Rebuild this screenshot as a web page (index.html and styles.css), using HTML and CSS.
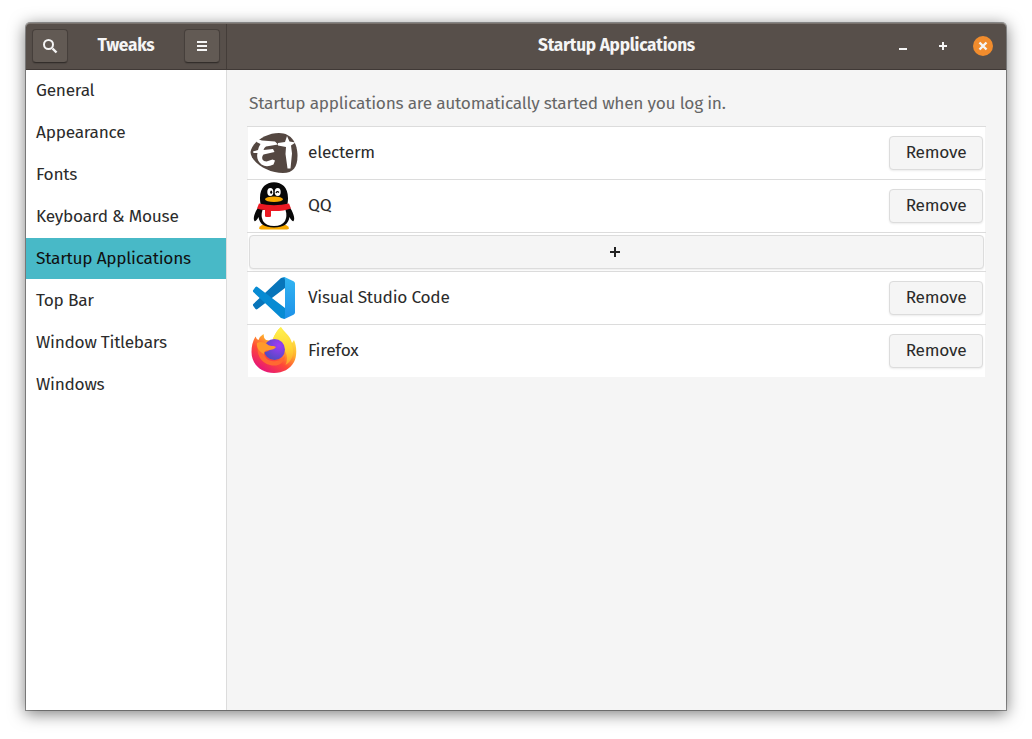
FILE: index.html
```html
<!DOCTYPE html>
<html lang="en">
<head>
<meta charset="utf-8">
<title>Tweaks</title>
<link rel="stylesheet" href="styles.css">
</head>
<body>
<div class="window">
  <header class="titlebar">
    <div class="titlebar-side">
      <button class="tool" aria-label="Search"><svg width="16" height="16" viewBox="0 0 16 16"><circle cx="6.500" cy="6.500" r="4.500" fill="none" stroke="#f5f5f5" stroke-width="2"/><path d="M10.500 10.500l4 4" stroke="#f5f5f5" stroke-width="2.400"/></svg></button>
      <h1 class="title title-app">Tweaks</h1>
      <button class="tool" aria-label="Menu"><svg width="16" height="16" viewBox="0 0 16 16"><path d="M3 4h10M3 8h10M3 12h10" stroke="#f5f5f5" stroke-width="2"/></svg></button>
    </div>
    <div class="titlebar-main">
      <h2 class="title title-page">Startup Applications</h2>
      <div class="controls">
        <svg width="20" height="20" viewBox="0 0 20 20"><path d="M6 13h8" stroke="#f5f5f5" stroke-width="2"/></svg>
        <svg width="20" height="20" viewBox="0 0 20 20"><path d="M6 10h8M10 6v8" stroke="#f5f5f5" stroke-width="2"/></svg>
        <svg width="20" height="20" viewBox="0 0 20 20"><circle cx="10" cy="10" r="10" fill="#f18c2d"/><path d="M6.500 6.500l7 7M13.500 6.500l-7 7" stroke="#f5f5f5" stroke-width="2.400"/></svg>
      </div>
    </div>
  </header>
  <div class="body">
    <nav class="sidebar">
      <a class="item">General</a>
      <a class="item">Appearance</a>
      <a class="item">Fonts</a>
      <a class="item">Keyboard &amp; Mouse</a>
      <a class="item selected">Startup Applications</a>
      <a class="item">Top Bar</a>
      <a class="item">Window Titlebars</a>
      <a class="item">Windows</a>
    </nav>
    <main class="content">
      <p class="intro">Startup applications are automatically started when you log in.</p>
      <div class="list">
        <div class="row">
          <svg class="app" viewBox="0 0 48 48"><path d="M.5 23C2 13 16 4 29 4C42 4 47.500 15 47.500 27C47.500 38 43 44 33 44C18 44 .5 33 .5 23Z" fill="#544741"/><path d="M7 10l5 1.500 13 1 3 3-12 2q-2 1-2.500 3.500l9.500-1 1.500 3-11 2.500q-2 2-1 5 1 2 4 2l6-2 2.500 1-1.500 4q-7 3.500-12 0c-4-3-5-7-4-11.500L3.500 24 3 22.500l5-1.500q.5-3 2.500-6l-4-2z" fill="#fff"/><path d="M28 14l7-1 2-6 2.500 5.500 6 1-4.500 3 1 8-1.500 15h-3L35.500 25l.5-7-8-1.500z" fill="#fff"/></svg>
          <span class="name">electerm</span><button class="remove">Remove</button>
        </div>
        <div class="row">
          <svg class="app" viewBox="0 0 48 48"><path d="M9 46q2-4 8-4h14q6 0 8 4 0 1.500-4 1.500H13Q9 47.500 9 46z" fill="#f8a900"/><path d="M10.500 22C8 7 15 .3 24 .3S40 7 37.500 22l4 6c2.500 5 3.500 9 2 11-1 1-3-2-4-4-1 7-6 10.500-15.500 10.500S9.500 42 8.500 35c-1 2-3 5-4 4-1.500-2-.5-6 2-11z" fill="#080808"/><path d="M12.500 28h23q2 6-.5 11-3 5-11 5t-11-5q-2.500-5-.5-11z" fill="#fff"/><ellipse cx="20.300" cy="10" rx="3" ry="3.900" fill="#fff"/><ellipse cx="27.700" cy="10" rx="3" ry="3.900" fill="#fff"/><ellipse cx="21.200" cy="10.200" rx="1" ry="1.600" fill="#000"/><path d="M26 11q1-2.500 3-.5" fill="none" stroke="#000" stroke-width="1.200"/><ellipse cx="24" cy="17.300" rx="9" ry="2.800" fill="#f8a900"/><path d="M9 21.500q15 3.500 30 0l2 5q-8 3-20 2.500v5.500q-3 1-6 0v-6.500q-5-.5-8-1.500z" fill="#eb1923"/></svg>
          <span class="name">QQ</span><button class="remove">Remove</button>
        </div>
        <div class="row row-add"><button class="add" aria-label="Add"><svg width="16" height="16" viewBox="0 0 16 16"><path d="M3 8h10M8 3v10" stroke="#222" stroke-width="2"/></svg></button></div>
        <div class="row">
          <svg class="app" viewBox="0 0 48 48"><defs><linearGradient id="code" x2="0" y2="1"><stop stop-color="#32b5f2"/><stop offset="1" stop-color="#1d91e8"/></linearGradient></defs><path d="M3.300 32q-.8-1 0-2L31 4l4-1v11L7.500 35q-1 .8-2 0z" fill="#0875ba"/><path d="M3.300 16q-.8 1 0 2L31 44l4 1V34L7.500 13q-1-.8-2 0z" fill="#078bd3"/><path d="M32 3.700q1.500-1.200 3-.4l8.500 4Q45 8 45 9.500v29q0 1.500-1.500 2.200l-8.500 4q-1.500.8-3-.4 3 1 3-2.300V6q0-3.300-3-2.300z" fill="url(#code)"/></svg>
          <span class="name">Visual Studio Code</span><button class="remove">Remove</button>
        </div>
        <div class="row">
          <svg class="app" viewBox="0 0 48 48"><defs><linearGradient id="fire" x1=".8" y1=".1" x2=".25" y2=".95"><stop stop-color="#fff04b"/><stop offset=".35" stop-color="#ffb02d"/><stop offset=".65" stop-color="#ff4a36"/><stop offset="1" stop-color="#e61678"/></linearGradient><radialGradient id="globe" cx=".7" cy=".3" r=".75"><stop stop-color="#a03bf5"/><stop offset="1" stop-color="#514bc2"/></radialGradient><linearGradient id="flame" y2="1" x2="0"><stop stop-color="#fff34f"/><stop offset=".55" stop-color="#ffd634"/><stop offset="1" stop-color="#ff9f2b"/></linearGradient></defs><path d="M5.500 9.500q1 3 3 3.500Q10 9 13.500 7q0 4 2.500 6l7 1c1-6 4-11 8-14 3 5 9 8 11 16l2-3c3 7 3 16 0 22-4 7-11 11-20 11C11 46 1.500 37 1.500 25q0-9 4-15.500z" fill="url(#fire)"/><path d="M22 15c1-6 5-10 8.500-15 2 7 10 10 12 20 2 8-1 14-7 18q3-7 0-13c-3-7-9-6-13.500-10z" fill="url(#flame)"/><circle cx="24.500" cy="22.500" r="10.500" fill="url(#globe)"/><path d="M8 18c2 0 7 3 13 4-2 2-5 3-7 3 0 7 6 10 12 9 4-.5 7-2 9-5-1 8-8 11-15 9C11 36 6 27 8 18z" fill="#ff6931"/><path d="M7 16c3-2 7-1 10 1 3 3 6 1 9 3-1 2-4 3-7 3-4 0-5 2-5 4-4-2-8-6-7-11z" fill="#ff9a2b"/></svg>
          <span class="name">Firefox</span><button class="remove">Remove</button>
        </div>
      </div>
    </main>
  </div>
</div>
</body>
</html>
```
FILE: styles.css
```css
* { box-sizing: border-box; }
body { margin: 0; height: 739px; padding: 23px 26px 29px; background: #fff; color: #2b2b2b; font: 17.3px/24px "Fira Sans", "Noto Sans", sans-serif; letter-spacing: -0.26px; overflow: hidden; }
button { padding: 0; font: inherit; letter-spacing: inherit; color: inherit; display: flex; align-items: center; justify-content: center; }
svg { display: block; flex: none; }
.window { width: 980px; height: 687px; display: flex; flex-direction: column; border-radius: 4px 4px 0 0; background: #f5f5f5; box-shadow: 0 0 0 1px rgba(0,0,0,.36), 0 3px 16px 1px rgba(0,0,0,.5); }
.titlebar { height: 47px; flex: none; display: flex; background: #574f4a; border-top: 1px solid #79726d; border-bottom: 1px solid #403936; border-radius: 4px 4px 0 0; color: #f5f5f5; }
.titlebar-side { width: 201px; border-right: 1px solid #443d39; padding: 0 6px 1px; display: flex; align-items: center; justify-content: space-between; }
.tool { width: 36px; height: 34px; border: 1px solid #463f3b; border-bottom-color: #332e2b; border-radius: 4px; background: #625a54; box-shadow: 0 1px 1px rgba(0,0,0,.12); }
.title { margin: 0; font-size: 17.3px; line-height: 24px; font-weight: 700; white-space: nowrap; }
.titlebar-main { flex: 1; display: grid; grid-template-columns: 130px 1fr 130px; align-items: center; padding-bottom: 1px; }
.title-page { grid-column: 2; justify-self: center; }
.controls { display: flex; gap: 20px; justify-content: flex-end; padding-right: 13px; }
.body { display: flex; flex: 1; }
.sidebar { width: 201px; background: #fff; border-right: 1px solid #dcdcdc; }
.item { display: flex; height: 41px; margin-bottom: 1px; padding: 0 10px; align-items: center; white-space: nowrap; }
.selected { background: #48b9c7; color: #101010; }
.content { flex: 1; padding: 22px 20px 0; }
.intro { margin: 0 2px 10px; color: #666; white-space: nowrap; }
.list { width: 739px; }
.row { height: 53px; border-top: 1px solid #dcdcdc; padding: 0 3px; display: flex; align-items: center; background: linear-gradient(#fff, #fff) 1px 0 / 737px 100% no-repeat; }
.app { width: 48px; height: 48px; }
.name { flex: 1; padding-left: 10px; }
.remove, .add { border: 1px solid #dcdcdc; border-radius: 4px; background: #f5f5f5; box-shadow: 0 1px 2px rgba(0,0,0,.08); height: 34px; }
.remove { width: 94px; }
.row-add { height: 39px; padding: 0 2px; }
.add { flex: 1; padding-right: 3px; }
```
